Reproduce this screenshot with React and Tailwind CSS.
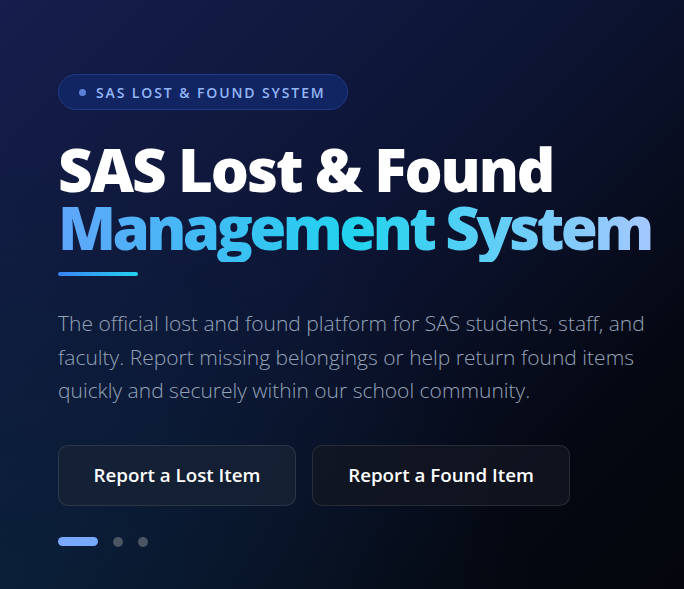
export default function App() {
  return (
    <div className="relative h-[589px] w-full overflow-hidden bg-[linear-gradient(135deg,#151e4c_0%,#0d1535_45%,#050812_80%,#04060c_100%)] font-['Open_Sans',sans-serif]">
      <div className="pointer-events-none absolute inset-0 bg-[radial-gradient(ellipse_at_0%_100%,rgba(8,40,60,0.55),transparent_55%)]" />
      <div className="relative flex flex-col items-start pl-[58px] pr-[16px] pt-[74px]">
        <div className="flex h-[36px] items-center gap-[10px] rounded-full border border-[#1f3a86] bg-[#122563] pl-[20px] pr-[21px]">
          <span className="h-[7px] w-[7px] rounded-full bg-[#5b80d6]" />
          <span className="text-[14px] font-semibold tracking-[0.135em] text-[#93b6f7]">SAS LOST &amp; FOUND SYSTEM</span>
        </div>

        <h1 className="mt-[30px] whitespace-nowrap text-[60px] font-extrabold leading-[58px] tracking-[-0.035em]">
          <span className="block text-white">SAS Lost &amp; Found</span>
          <span className="block bg-[linear-gradient(90deg,#60a5fa_0%,#22d3ee_50%,#a5c8ff_100%)] bg-clip-text pb-[6px] tracking-[-0.06em] text-transparent">
            Management System
          </span>
        </h1>

        <div className="mt-[10px] h-[4px] w-[80px] rounded-full bg-[linear-gradient(90deg,#3b82f6,#22d3ee)]" />

        <p className="mt-[31px] max-w-[600px] text-[21px] font-light leading-[33.5px] text-[#94a3b8]">
          The official lost and found platform for SAS students, staff, and faculty. Report missing belongings or help return found items quickly and securely within our school community.
        </p>

        <div className="mt-[37px] flex gap-[16px]">
          <button type="button" className="h-[61px] w-[238px] rounded-[10px] border border-white/10 bg-[#172234]/80 text-[18.75px] font-semibold text-white">
            Report a Lost Item
          </button>
          <button type="button" className="h-[61px] w-[258px] rounded-[10px] border border-white/10 bg-[#131722]/80 text-[18.75px] font-semibold text-white">
            Report a Found Item
          </button>
        </div>

        <div className="mt-[31px] flex items-center gap-[10px]">
          <span className="h-[9px] w-[40px] rounded-full bg-[#78a8ff]" />
          <span className="ml-[5px] h-[10px] w-[10px] rounded-full bg-[#4b5563]" />
          <span className="ml-[5px] h-[10px] w-[10px] rounded-full bg-[#4b5563]" />
        </div>
      </div>
    </div>
  )
}
